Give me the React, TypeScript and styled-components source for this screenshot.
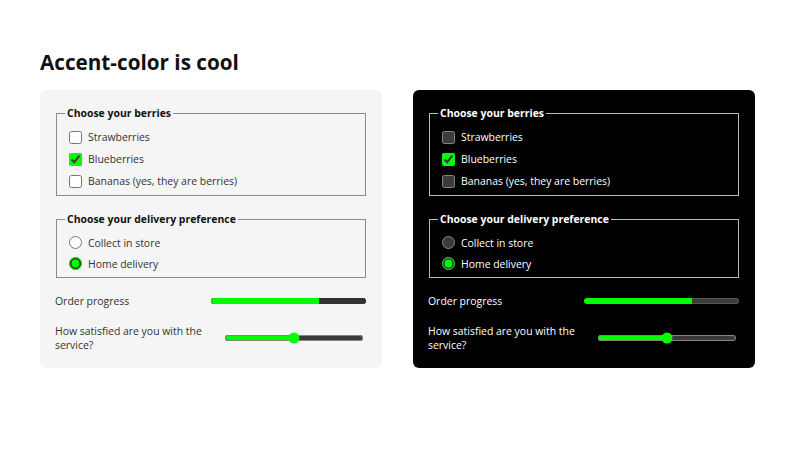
import styled, { createGlobalStyle } from "styled-components";

const Global = createGlobalStyle`
  html, body { margin: 0; background: #fff; }
  body { font-family: "Open Sans", "Noto Sans", sans-serif; }
`;

const Page = styled.main`
  width: 800px;
  height: 450px;
  box-sizing: border-box;
  padding: 49px 40px 0;
`;

const Title = styled.h1`
  margin: 0 0 15px;
  font-size: 20.7px;
  line-height: 26px;
  font-weight: 700;
  color: #111;
`;

const Panels = styled.div`
  display: grid;
  grid-template-columns: 342px 342px;
  gap: 31px;
`;

const Panel = styled.form<{ $dark?: boolean }>`
  display: flex;
  flex-direction: column;
  gap: 16px;
  padding: 16px;
  border-radius: 6px;
  font-size: 10.45px;
  line-height: 14px;
  accent-color: lime;
  color-scheme: ${(p) => (p.$dark ? "dark" : "light")};
  background: ${(p) => (p.$dark ? "#000" : "#f5f5f5")};
  color: ${(p) => (p.$dark ? "#fff" : "#333")};
`;

const Group = styled.fieldset<{ $dark?: boolean }>`
  margin: 0;
  padding: 5px 8px 3px;
  border: 1px solid ${(p) => (p.$dark ? "#bbb" : "#8a8a8a")};
`;

const Legend = styled.legend<{ $dark?: boolean }>`
  padding: 0 2px;
  line-height: 15px;
  font-weight: 700;
  color: ${(p) => (p.$dark ? "#fff" : "#111")};
`;

const Option = styled.label<{ $h?: number }>`
  display: flex;
  align-items: center;
  height: ${(p) => p.$h ?? 22}px;
  gap: 3px;
  input {
    margin: 0 3px 0 4px;
    width: 13px;
    height: 13px;
  }
`;

const Row = styled.label`
  display: grid;
  grid-template-columns: 1fr 1fr;
  align-items: center;
  margin-left: -1px;
`;

const Progress = styled.progress<{ $dark?: boolean }>`
  -webkit-appearance: none;
  appearance: none;
  width: 100%;
  height: 6px;
  border: none;
  border-radius: 3px;
  overflow: hidden;
  background: ${(p) => (p.$dark ? "#3c3c3c" : "#333")};
  &::-webkit-progress-bar {
    background: ${(p) => (p.$dark ? "#3c3c3c" : "#333")};
    border-radius: 3px;
    box-shadow: ${(p) => (p.$dark ? "inset 0 0 0 1px #555" : "none")};
  }
  &::-webkit-progress-value {
    background: lime;
    border-radius: 3px 0 0 3px;
  }
`;

const Range = styled.input`
  justify-self: end;
  width: 186px;
  margin: 0 3px 0 0;
  zoom: 0.75;
`;

function Demo({ dark, id }: { dark?: boolean; id: string }) {
  return (
    <Panel $dark={dark} onSubmit={(e) => e.preventDefault()}>
      <Group $dark={dark}>
        <Legend $dark={dark}>Choose your berries</Legend>
        <Option>
          <input type="checkbox" />
          Strawberries
        </Option>
        <Option>
          <input type="checkbox" defaultChecked />
          Blueberries
        </Option>
        <Option>
          <input type="checkbox" />
          Bananas (yes, they are berries)
        </Option>
      </Group>
      <Group $dark={dark}>
        <Legend $dark={dark}>Choose your delivery preference</Legend>
        <Option $h={21}>
          <input type="radio" name={`delivery-${id}`} />
          Collect in store
        </Option>
        <Option $h={21}>
          <input type="radio" name={`delivery-${id}`} defaultChecked />
          Home delivery
        </Option>
      </Group>
      <Row>
        Order progress
        <Progress $dark={dark} max={100} value={70} />
      </Row>
      <Row>
        How satisfied are you with the service?
        <Range type="range" min={0} max={100} defaultValue={50} />
      </Row>
    </Panel>
  );
}

export default function App() {
  return (
    <>
      <Global />
      <Page>
        <Title>Accent-color is cool</Title>
        <Panels>
          <Demo id="light" />
          <Demo id="dark" dark />
        </Panels>
      </Page>
    </>
  );
}
